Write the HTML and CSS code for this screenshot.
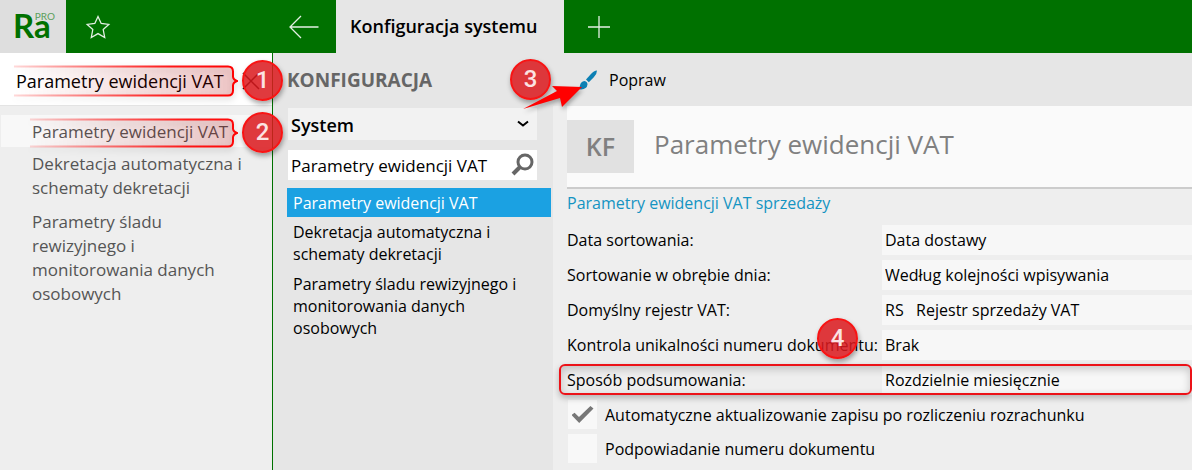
FILE: index.html
```
<!DOCTYPE html>
<html lang="pl">
<head>
  <meta charset="UTF-8" />
  <title>Konfiguracja systemu</title>
  <meta name="viewport" content="width=device-width, initial-scale=1" />
  <link rel="stylesheet" href="styles.css">
</head>
<body>
  <header class="topbar">
    <div class="topbar-left">
      <a class="logo" href="#"><span class="logo-name">Ra</span><sup class="logo-pro">PRO</sup></a>
      <button class="icon-btn star" type="button" aria-label="Ulubione">
        <svg width="26" height="26" viewBox="0 0 26 26"><path d="M13 2.5l3.2 7 7.6.9-5.6 5.2 1.5 7.9-6.7-3.9-6.7 3.9 1.5-7.9-5.6-5.2 7.6-.9z"/></svg>
      </button>
    </div>
    <button class="icon-btn back" type="button" aria-label="Wstecz">
      <svg width="30" height="24" viewBox="0 0 30 24"><path d="M12 1L1 12l11 11M1 12h28.500"/></svg>
    </button>
    <a class="tab" href="#">Konfiguracja systemu</a>
    <button class="icon-btn plus" type="button" aria-label="Nowa karta">
      <svg width="24" height="24" viewBox="0 0 24 24"><path d="M12 1v22M1 12h22"/></svg>
    </button>
  </header>

  <div class="main">
    <aside class="menu">
      <div class="menu-search">
        <input type="text" aria-label="Szukaj w menu" value="Parametry ewidencji VAT">
        <button class="clear" type="button" aria-label="Wyczyść">
          <svg width="18" height="18" viewBox="0 0 18 18"><path d="M1 1l16 16M17 1L1 17"/></svg>
        </button>
        <svg class="bracket" width="224" height="32" viewBox="0 0 224 32">
          <defs>
            <linearGradient id="line" x1="0" x2="224" y1="0" y2="0" gradientUnits="userSpaceOnUse"><stop offset="0" stop-color="#f00" stop-opacity=".15"/><stop offset=".7" stop-color="#f00" stop-opacity=".9"/><stop offset="1" stop-color="#f00"/></linearGradient>
            <linearGradient id="fade" x1="0" x2="224" y1="0" y2="0" gradientUnits="userSpaceOnUse"><stop offset="0" stop-color="#c00" stop-opacity="0"/><stop offset="1" stop-color="#c00" stop-opacity=".2"/></linearGradient>
          </defs>
          <path fill="url(#fade)" stroke="url(#line)" stroke-width="2" d="M0 1.500h214q5 0 5 5v5q0 3 4 4.500q-4 1.500-4 4.500v5q0 5-5 5h-214"/>
        </svg>
        <span class="badge badge-menu">1</span>
      </div>
      <ul class="menu-list">
        <li class="active">
          <a href="#">Parametry ewidencji VAT</a>
          <svg class="bracket" width="208" height="30" viewBox="0 0 208 30">
            <path fill="url(#fade)" stroke="url(#line)" stroke-width="2" d="M0 1.500h198q5 0 5 5v4q0 3 4 4.500q-4 1.500-4 4.500v4q0 5-5 5h-198"/>
          </svg>
          <span class="badge badge-menu">2</span>
        </li>
        <li><a href="#">Dekretacja automatyczna i schematy dekretacji</a></li>
        <li><a href="#">Parametry śladu rewizyjnego i monitorowania danych osobowych</a></li>
      </ul>
    </aside>

    <nav class="config">
      <h2>KONFIGURACJA</h2>
      <div class="field config-select">
        <select aria-label="Obszar konfiguracji"><option>System</option></select>
        <svg width="12" height="8" viewBox="0 0 12 8"><path d="M1 1.500l5 4 5-4"/></svg>
      </div>
      <div class="field config-search">
        <input type="text" aria-label="Szukaj parametru" value="Parametry ewidencji VAT">
        <button type="button" aria-label="Szukaj">
          <svg width="24" height="24" viewBox="0 0 24 24"><circle cx="14" cy="9" r="7"/><path class="handle" d="M9 14l-7 7"/></svg>
        </button>
      </div>
      <ul class="config-list">
        <li class="active"><a href="#">Parametry ewidencji VAT</a></li>
        <li><a href="#">Dekretacja automatyczna i schematy dekretacji</a></li>
        <li><a href="#">Parametry śladu rewizyjnego i monitorowania danych osobowych</a></li>
      </ul>
    </nav>

    <main class="content">
      <div class="toolbar">
        <button class="edit" type="button">
          <svg width="20" height="20" viewBox="0 0 20 20"><path d="M19 .5q-3 0-6.500 4L8 9.500l2.800 2.800 5-5Q19 4 19 .5z"/><path d="M6.500 11q3 .5 3 3.500-.5 4.500-6.500 5-2 0-3-1 2-.5 2-3 .5-4 4.500-4.500z"/></svg>
          Popraw
        </button>
        <span class="badge badge-edit">3</span>
        <svg class="arrow" width="60" height="28" viewBox="0 0 60 28"><path d="M0 25L34 7 29 2 59 3 39 23 37 14z"/></svg>
      </div>
      <div class="page-head">
        <span class="symbol">KF</span>
        <h1>Parametry ewidencji VAT</h1>
      </div>
      <form class="params">
        <h3>Parametry ewidencji VAT sprzedaży</h3>
        <div class="row">
          <label for="date">Data sortowania:</label>
          <input type="text" id="date" value="Data dostawy" readonly>
        </div>
        <div class="row">
          <label for="order">Sortowanie w obrębie dnia:</label>
          <input type="text" id="order" value="Według kolejności wpisywania" readonly>
        </div>
        <div class="row">
          <label for="register">Domyślny rejestr VAT:</label>
          <input type="text" id="register" value="RS &nbsp; Rejestr sprzedaży VAT" readonly>
        </div>
        <div class="row">
          <label for="unique">Kontrola unikalności numeru dokumentu:</label>
          <input type="text" id="unique" value="Brak" readonly>
          <span class="badge badge-row">4</span>
        </div>
        <div class="row marked">
          <label for="summary">Sposób podsumowania:</label>
          <input type="text" id="summary" value="Rozdzielnie miesięcznie" readonly>
        </div>
        <label class="check"><input type="checkbox" checked><span>Automatyczne aktualizowanie zapisu po rozliczeniu rozrachunku</span></label>
        <label class="check"><input type="checkbox"><span>Podpowiadanie numeru dokumentu</span></label>
      </form>
    </main>
  </div>
</body>
</html>
```
FILE: styles.css
```
* {
  box-sizing: border-box;
}
body {
  margin: 0;
  min-height: 100vh;
  display: flex;
  flex-direction: column;
  background: #eee;
  color: #000;
  font: 16px/22px "Segoe UI", "Open Sans", "Noto Sans", sans-serif;
  overflow-x: hidden;
}
a {
  color: inherit;
  text-decoration: none;
}
ul, h1, h2, h3 {
  margin: 0;
  padding: 0;
  list-style: none;
  font-weight: normal;
}
button, input, select {
  border: none;
  margin: 0;
  padding: 0;
  background: none;
  color: inherit;
  font: inherit;
  outline: none;
}
svg {
  display: block;
  fill: none;
}

/* top bar */
.topbar {
  display: flex;
  height: 53px;
  background: #007100;
}
.topbar-left {
  width: 272px;
  display: flex;
}
.logo {
  width: 66px;
  padding-left: 13px;
  display: flex;
  background: #dedede;
  color: #007100;
}
.logo-name {
  font: bold 33px/51px Lato, sans-serif;
}
.logo-pro {
  margin: 11px 0 0 -16px;
  font: 10px/10px Lato, sans-serif;
  color: #5c9f5c;
}
.icon-btn {
  width: 64px;
  display: flex;
  align-items: center;
  justify-content: center;
}
.icon-btn svg {
  stroke: #e4f0e4;
  stroke-width: 1.3;
}
.plus {
  width: 70px;
}
.tab {
  width: 228px;
  padding-left: 14px;
  background: #e6e6e6;
  font-size: 18px;
  font-weight: 600;
  line-height: 53px;
}

.main {
  flex: 1;
  display: flex;
}

/* left menu */
.menu {
  width: 273px;
  flex: none;
  border-right: 1px solid #007100;
  color: #555;
}
.menu-search {
  position: relative;
  display: flex;
  align-items: center;
  height: 53px;
  padding: 3px 0 0 16px;
  background: #fff;
  border-bottom: 1px solid #e4e4e4;
}
.menu-search input {
  flex: 1;
  min-width: 0;
  color: #000;
  font-size: 18px;
}
.clear {
  margin-right: 12px;
}
.clear svg {
  stroke: #000;
  stroke-width: 1.5;
}
.menu-list {
  padding: 9px 0 0 1px;
  font-size: 17px;
  line-height: 24px;
}
.menu-list li {
  position: relative;
  padding: 5px 20px 5px 31px;
}
.menu-list .active {
  height: 32px;
  background: #f8f8f8;
  padding-right: 0;
}
.bracket {
  position: absolute;
  right: 34px;
  top: 50%;
  margin-top: 2px;
  transform: translateY(-50%);
  filter: drop-shadow(0 3px 3px rgba(0, 0, 0, .2));
}

/* numbered markers */
.badge {
  position: absolute;
  z-index: 2;
  width: 41px;
  height: 41px;
  border: 2px solid #f81414;
  border-radius: 50%;
  background: rgba(219, 26, 30, .86);
  box-shadow: 1px 3px 5px rgba(0, 0, 0, .35);
  color: #fbe3e3;
  font: 500 24px/37px Roboto, sans-serif;
  text-align: center;
}
.badge-menu {
  right: -11px;
  top: 50%;
  margin-top: -19px;
}
.badge-edit {
  left: -43px;
  top: 6px;
}
.badge-row {
  left: 250px;
  top: -12px;
}
.arrow {
  position: absolute;
  left: -30px;
  top: 31px;
  z-index: 3;
  filter: drop-shadow(1px 3px 2px rgba(0, 0, 0, .3));
}
.arrow path {
  fill: #f00;
}

/* configuration list */
.config {
  width: 280px;
  flex: none;
  padding-left: 14px;
  background: #e6e6e6;
}
.config h2 {
  height: 55px;
  padding-top: 1px;
  color: #666;
  font-size: 19px;
  font-weight: bold;
  line-height: 53px;
}
.field {
  position: relative;
  display: flex;
  align-items: center;
  margin: 0 16px 10px 1px;
  padding-left: 3px;
}
.config-select {
  height: 32px;
  background: #f2f2f2;
}
.config-select select {
  width: 100%;
  padding-top: 1px;
  appearance: none;
  font-size: 18px;
  font-weight: 600;
}
.config-select svg {
  position: absolute;
  right: 8px;
  stroke: #000;
  stroke-width: 2;
  pointer-events: none;
}
.config-search {
  height: 30px;
  margin-bottom: 8px;
  background: #fff;
}
.config-search input {
  flex: 1;
  min-width: 0;
  padding-top: 1px;
  font-size: 17px;
}
.config-search button {
  margin-right: 2px;
}
.config-search svg {
  stroke: #666;
  stroke-width: 3;
}
.config-search .handle {
  stroke-width: 4;
}
.config-list {
  margin-right: 2px;
}
.config-list li {
  padding: 4px 10px 4px 6px;
}
.config-list .active {
  padding: 4px 6px 3px;
  background: #1ba1e2;
  color: #fff;
}

/* parameters page */
.content {
  flex: 1;
  min-width: 0;
}
.toolbar {
  position: relative;
  height: 53px;
  padding-left: 25px;
  display: flex;
  background: #e6e6e6;
}
.edit {
  display: flex;
  align-items: center;
  gap: 11px;
}
.edit svg {
  fill: #0c80b4;
}
.page-head {
  display: flex;
  align-items: center;
  gap: 20px;
  height: 83px;
  margin-left: 14px;
  background: #fafafa;
  border-bottom: 2px solid #ccc;
}
.symbol {
  width: 67px;
  background: #e1e1e1;
  color: #808080;
  font-size: 25px;
  font-weight: 600;
  line-height: 53px;
  text-align: center;
}
.page-head h1 {
  padding-bottom: 6px;
  color: #808080;
  font-size: 26px;
  line-height: 36px;
}
.params {
  padding-left: 14px;
}
.params h3 {
  padding: 3px 0 11px;
  color: #1494c2;
  font-size: 16px;
}
.row {
  position: relative;
  display: grid;
  grid-template-columns: 315px 1fr;
  align-items: center;
  height: 30px;
  margin-bottom: 5px;
}
.row input {
  width: 100%;
  height: 30px;
  padding-left: 3px;
  background: #f7f7f7;
}
.marked::after {
  content: "";
  position: absolute;
  inset: -1px 0 0 -8px;
  border: 2px solid #ec1218;
  border-radius: 6px;
  box-shadow: 0 3px 6px rgba(0, 0, 0, .25), inset 0 3px 8px rgba(0, 0, 0, .2);
  pointer-events: none;
}
.check {
  display: flex;
  align-items: center;
  gap: 8px;
  margin: 0 0 5px 1px;
}
.check input {
  appearance: none;
  width: 29px;
  height: 29px;
  background: #f8f8f8;
  display: grid;
  place-items: center;
}
.check input:checked::before {
  content: "";
  width: 22px;
  height: 17px;
  background: #777;
  clip-path: polygon(0 53%, 14% 39%, 34% 65%, 86% 0, 100% 14%, 35% 100%);
}
```
